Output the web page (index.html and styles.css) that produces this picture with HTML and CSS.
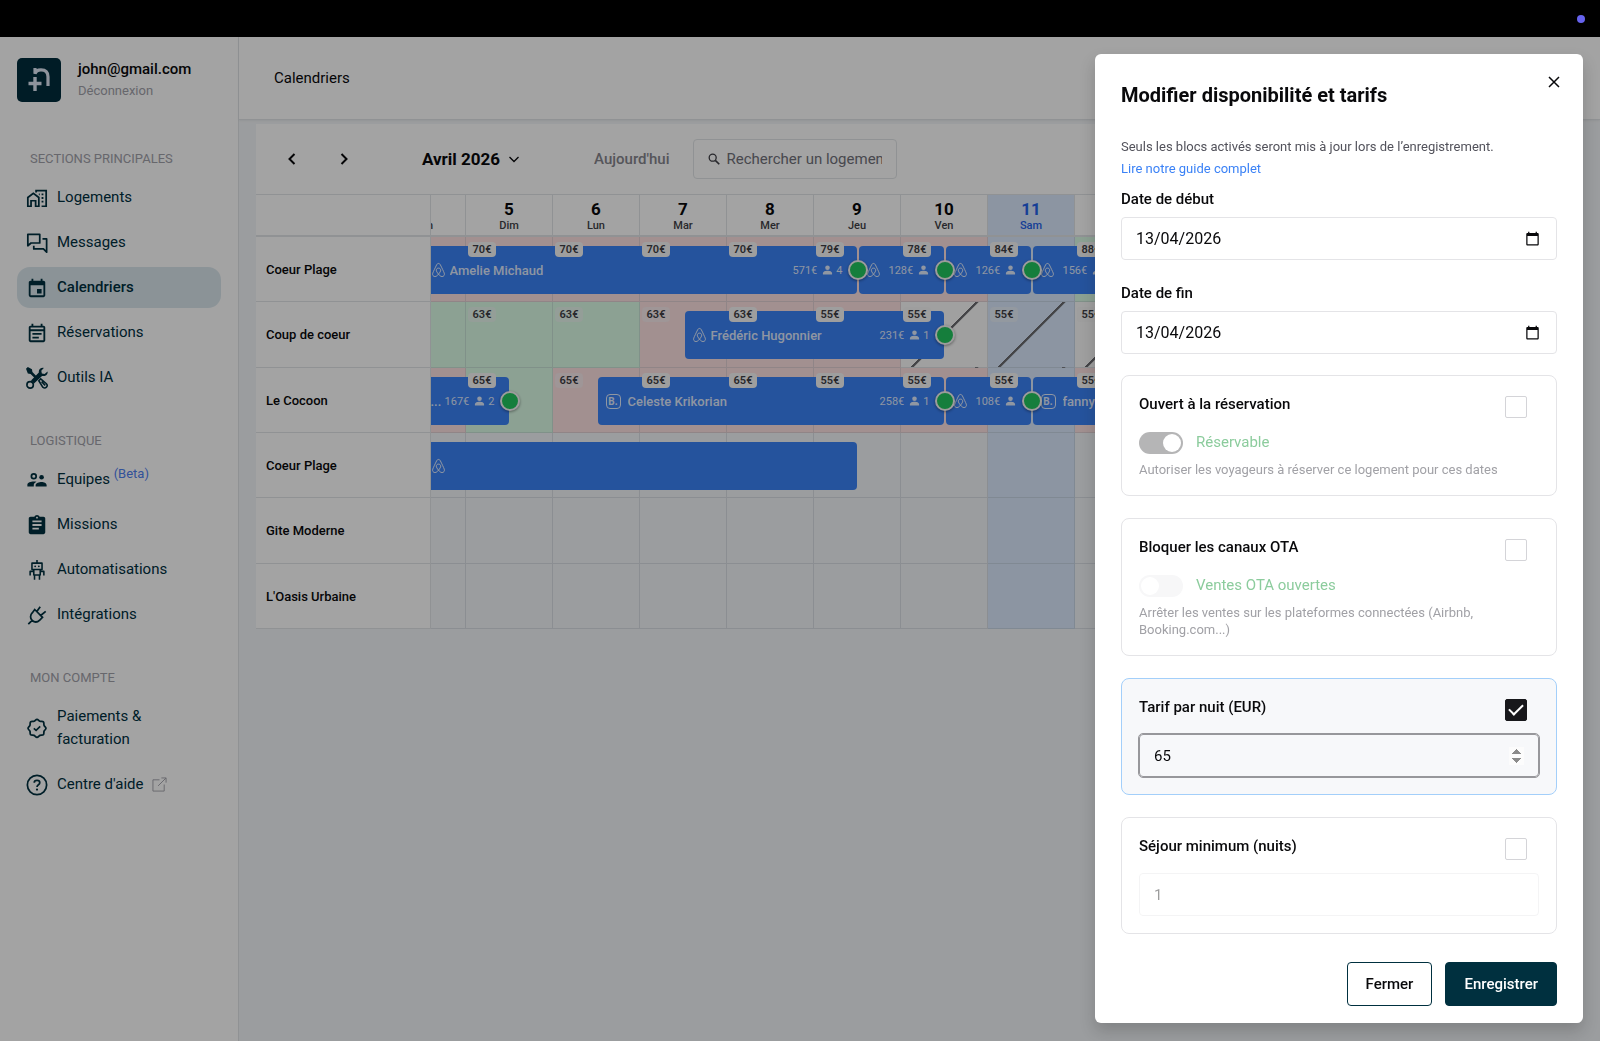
FILE: index.html
```html
<!DOCTYPE html>
<html lang="fr">
<head>
<meta charset="utf-8">
<meta name="viewport" content="width=device-width, initial-scale=1">
<title>Calendriers</title>
<link rel="stylesheet" href="styles.css">
</head>
<body>
<svg class="sprite" aria-hidden="true">
  <symbol id="i-airbnb" viewBox="0 0 24 24"><g fill="none" stroke="currentColor" stroke-width="1.6"><path d="M12 1.5c1.5 0 2.3.9 3.1 2.500 2.100 4.200 5 10.200 6.100 13 1.100 3-.8 5.500-3.500 5.500-2.300 0-4.200-1.900-5.700-3.800-1.500 1.900-3.400 3.800-5.700 3.800-2.700 0-4.600-2.500-3.500-5.500 1.100-2.800 4-8.800 6.100-13 .8-1.600 1.600-2.500 3.100-2.500z"/><path d="M12 18.700c-2-2.400-3.500-4.600-3.500-6.500 0-2 1.500-3.200 3.500-3.200s3.500 1.200 3.500 3.200c0 1.900-1.500 4.100-3.500 6.500z"/></g></symbol>
  <symbol id="i-user" viewBox="0 0 24 24"><circle cx="12" cy="6.500" r="5.500"/><path d="M1 23v-2.500c0-5 6-6.500 11-6.500s11 1.500 11 6.500V23z"/></symbol>
  <symbol id="i-date" viewBox="0 0 24 24"><path d="M20 3h-1V1h-2v2H7V1H5v2H4c-1.100 0-2 .9-2 2v16c0 1.100.9 2 2 2h16c1.100 0 2-.9 2-2V5c0-1.100-.9-2-2-2zm0 18H4V8h16v13z"/></symbol>
</svg>

<div class="topbar"><span class="topbar-dot"></span></div>

<div class="app">
  <aside class="sidebar">
    <div class="profile">
      <svg class="logo" viewBox="0 0 44 44" aria-hidden="true"><rect width="44" height="44" rx="5" fill="#002d3c"/><path d="M18 10v5.500M18 16c.5-2.500 3-4.200 6-4.200 4.500 0 7 2.400 7 7V28" fill="none" stroke="#dfe7f5" stroke-width="3.200"/><path d="M18 19v14M11.500 25.500h13" fill="none" stroke="#dfe7f5" stroke-width="3.400"/></svg>
      <div>
        <div class="email">john@gmail.com</div>
        <a class="logout" href="#">Déconnexion</a>
      </div>
    </div>

    <nav>
      <h2 class="nav-title">SECTIONS PRINCIPALES</h2>
      <ul class="nav-list">
        <li><a class="nav-item" href="#"><svg class="icon" viewBox="0 0 24 24"><path d="M2 21v-9.500L8 7l6 4.500V21h-3.500v-6h-5v6zM11 6V4h11v17h-5" fill="none" stroke="currentColor" stroke-width="1.900"/><path d="M17 7h2v2h-2zM17 11h2v2h-2zM17 15h2v2h-2zM14 7h1v2h-1z"/></svg>Logements</a></li>
        <li><a class="nav-item" href="#"><svg class="icon" viewBox="0 0 24 24"><path d="M2 2.500h13v9.500H5.500L2 15zM18 7.500h4.500v14.500L19 18.500H8.500V15" fill="none" stroke="currentColor" stroke-width="1.900" stroke-linejoin="round"/></svg>Messages</a></li>
        <li><a class="nav-item active" href="#"><svg class="icon" viewBox="0 0 24 24"><path d="M19 4h-1V2h-2v2H8V2H6v2H5c-1.110 0-1.990.9-1.990 2L3 20a2 2 0 0 0 2 2h14c1.100 0 2-.9 2-2V6c0-1.100-.9-2-2-2zm0 16H5V9h14v11zm-7-7h5v5h-5z"/></svg>Calendriers</a></li>
        <li><a class="nav-item" href="#"><svg class="icon" viewBox="0 0 24 24"><path d="M19 4h-1V2h-2v2H8V2H6v2H5c-1.110 0-1.990.9-1.990 2L3 20c0 1.100.89 2 2 2h14c1.100 0 2-.9 2-2V6c0-1.100-.9-2-2-2zm0 16H5V10h14v10zm0-12H5V6h14v2zM7 12h10v2H7zm0 4h7v2H7z"/></svg>Réservations</a></li>
        <li><a class="nav-item" href="#"><svg class="icon" viewBox="0 0 24 24"><path d="M0 2L2 0l4.500 2.500.5 3 5 5-2 2-5-5-3-.5z"/><path d="M14 15l2-2 6 5c1.300 1.300 1.300 3 .3 4s-2.800 1-4 0zM17 16l4 4" fill="none" stroke="currentColor" stroke-width="1.700"/><path d="M23.500 5l-3.200 2.700-3-.6-.6-2.900L19.400 1c-3-.6-6 1.800-5.400 5L5.500 14.700l3.300 3.300 8.700-8.200c3.200.6 6.800-1.600 6-4.800z"/><circle cx="4.500" cy="19.500" r="3.500" fill="none" stroke="currentColor" stroke-width="1.800"/></svg>Outils IA</a></li>
      </ul>
      <h2 class="nav-title">LOGISTIQUE</h2>
      <ul class="nav-list">
        <li><a class="nav-item" href="#"><svg class="icon" viewBox="0 0 24 24"><circle cx="8.500" cy="8" r="2.600" fill="none" stroke="currentColor" stroke-width="1.900"/><circle cx="17" cy="9" r="2.500"/><path d="M1.500 19v-2c0-2.300 3.700-3.500 7-3.500 1 0 2 .1 3 .4-2 1-3 2.200-3 3.600V19zM10.500 19v-1.500c0-2.300 4-3.400 6.500-3.400s5.500 1.100 5.500 3.400V19z"/></svg><span>Equipes <sup class="beta">(Beta)</sup></span></a></li>
        <li><a class="nav-item" href="#"><svg class="icon" viewBox="0 0 24 24"><path d="M19 3h-4.180C14.400 1.840 13.300 1 12 1c-1.300 0-2.400.84-2.820 2H5c-1.100 0-2 .9-2 2v15c0 1.100.9 2 2 2h14c1.100 0 2-.9 2-2V5c0-1.100-.9-2-2-2zm-7 0c.55 0 1 .45 1 1s-.45 1-1 1-1-.45-1-1 .45-1 1-1zm2 14H7v-2h7v2zm3-4H7v-2h10v2zm0-4H7V7h10v2z"/></svg>Missions</a></li>
        <li><a class="nav-item" href="#"><svg class="icon" viewBox="0 0 24 24"><path d="M12 1v3M6.500 4.500h11v7h-11zM8.500 11.500v6h7v-6M8.500 13.500H4.500V18M15.500 13.500h4V18M9.300 17v5.500M14.700 17v5.500" fill="none" stroke="currentColor" stroke-width="1.700" stroke-linejoin="round"/><circle cx="10" cy="8" r="1"/><circle cx="14" cy="8" r="1"/></svg>Automatisations</a></li>
        <li><a class="nav-item" href="#"><svg class="icon" viewBox="0 0 24 24"><path d="M2.500 22l4.500-4.500M9.500 6l8.500 8.500-3 3c-2.700 2.700-6 2.500-8.300.3s-2.400-5.700.3-8.300zM12 8l3.500-5M16 12.500l5.500-4.500" fill="none" stroke="currentColor" stroke-width="1.900"/></svg>Intégrations</a></li>
      </ul>
      <h2 class="nav-title">MON COMPTE</h2>
      <ul class="nav-list">
        <li><a class="nav-item" href="#"><svg class="icon" viewBox="0 0 24 24"><path d="M12 2.500c1.300 0 2 1.600 3.200 2.100s2.900-.2 3.800.7.200 2.600.7 3.800 2.100 1.900 2.100 3.200-1.600 2-2.100 3.200.2 2.900-.7 3.800-2.600.2-3.800.7-1.900 2.100-3.200 2.100-2-1.600-3.200-2.100-2.900.2-3.800-.7-.2-2.600-.7-3.800-2.100-1.900-2.100-3.200 1.600-2 2.100-3.200-.2-2.900.7-3.800 2.600-.2 3.800-.7 1.900-2.100 3.200-2.100z" fill="none" stroke="currentColor" stroke-width="1.900"/><path d="M8.500 12.300l2.500 2.200 4.500-4.300" fill="none" stroke="currentColor" stroke-width="1.800"/></svg><span>Paiements &amp; facturation</span></a></li>
        <li><a class="nav-item" href="#"><svg class="icon" viewBox="0 0 24 24"><circle cx="12" cy="12" r="10.500" fill="none" stroke="currentColor" stroke-width="1.900"/><path d="M9 9.500C9 7.800 10.300 7 12 7s3 .9 3 2.500c0 2.200-3 2.300-3 4.700" fill="none" stroke="currentColor" stroke-width="1.900"/><circle cx="12" cy="17" r="1.200"/></svg>Centre d'aide<svg class="external" viewBox="0 0 16 16"><path d="M8 3H1v12h12V8M10 1h5v5M15 1L6.500 9.500" fill="none" stroke="currentColor"/></svg></a></li>
      </ul>
    </nav>
  </aside>

  <main class="main">
    <header class="page-head"><h1>Calendriers</h1></header>
    <section class="calendar">
      <div class="toolbar">
        <button class="arrow" aria-label="Précédent"><svg viewBox="0 0 16 16"><path d="M10.500 3l-5 5 5 5" fill="none" stroke="currentColor" stroke-width="2"/></svg></button>
        <button class="arrow" aria-label="Suivant"><svg viewBox="0 0 16 16"><path d="M5.500 3l5 5-5 5" fill="none" stroke="currentColor" stroke-width="2"/></svg></button>
        <button class="month">Avril 2026<svg viewBox="0 0 12 12"><path d="M1.500 4L6 8.500 10.500 4" fill="none" stroke="currentColor" stroke-width="1.300"/></svg></button>
        <button class="today-btn">Aujourd'hui</button>
        <label class="search"><svg viewBox="0 0 16 16"><circle cx="6.500" cy="6.500" r="4" fill="none" stroke="currentColor" stroke-width="1.500"/><path d="M9.500 9.500L14 14" stroke="currentColor" stroke-width="1.900"/></svg><input type="search" placeholder="Rechercher un logement" aria-label="Rechercher un logement"></label>
      </div>

      <div class="planning">
        <div class="names">
          <div class="corner"></div>
          <div class="name">Coeur Plage</div>
          <div class="name">Coup de coeur</div>
          <div class="name">Le Cocoon</div>
          <div class="name">Coeur Plage</div>
          <div class="name">Gite Moderne</div>
          <div class="name">L'Oasis Urbaine</div>
        </div>
        <div class="viewport">
          <div class="track">
            <div class="days">
              <div class="day"><b>4</b>Sam</div><div class="day"><b>5</b>Dim</div><div class="day"><b>6</b>Lun</div><div class="day"><b>7</b>Mar</div><div class="day"><b>8</b>Mer</div><div class="day"><b>9</b>Jeu</div><div class="day"><b>10</b>Ven</div><div class="day today"><b>11</b>Sam</div><div class="day"></div>
            </div>

            <div class="row">
              <div class="cell busy"></div><div class="cell busy"><span class="price">70€</span></div><div class="cell busy"><span class="price">70€</span></div><div class="cell busy"><span class="price">70€</span></div><div class="cell busy"><span class="price">70€</span></div><div class="cell busy"><span class="price">79€</span></div><div class="cell busy"><span class="price">78€</span></div><div class="cell today"><span class="price">84€</span></div><div class="cell free"><span class="price">88€</span></div>
              <div class="booking" style="--from:.5;--nights:5"><svg class="channel"><use href="#i-airbnb"/></svg><span class="guest">Amelie Michaud</span><span class="meta">571€<svg><use href="#i-user"/></svg>4</span><i class="paid"></i></div>
              <div class="booking" style="--from:5.5;--nights:1"><svg class="channel"><use href="#i-airbnb"/></svg><span class="guest"></span><span class="meta">128€<svg><use href="#i-user"/></svg></span><i class="paid"></i></div>
              <div class="booking" style="--from:6.5;--nights:1"><svg class="channel"><use href="#i-airbnb"/></svg><span class="guest"></span><span class="meta">126€<svg><use href="#i-user"/></svg></span><i class="paid"></i></div>
              <div class="booking" style="--from:7.5;--nights:1"><svg class="channel"><use href="#i-airbnb"/></svg><span class="guest"></span><span class="meta">156€<svg><use href="#i-user"/></svg></span></div>
            </div>

            <div class="row">
              <div class="cell free"></div><div class="cell free"><span class="price bare">63€</span></div><div class="cell free"><span class="price bare">63€</span></div><div class="cell busy"><span class="price bare">63€</span></div><div class="cell busy"><span class="price">63€</span></div><div class="cell busy"><span class="price">55€</span></div><div class="cell closed"><span class="price">55€</span></div><div class="cell today closed"><span class="price bare">55€</span></div><div class="cell closed"><span class="price bare">55€</span></div>
              <div class="booking" style="--from:3.5;--nights:3"><svg class="channel"><use href="#i-airbnb"/></svg><span class="guest">Frédéric Hugonnier</span><span class="meta">231€<svg><use href="#i-user"/></svg>1</span><i class="paid"></i></div>
            </div>

            <div class="row">
              <div class="cell busy"></div><div class="cell free"><span class="price">65€</span></div><div class="cell busy"><span class="price bare">65€</span></div><div class="cell busy"><span class="price">65€</span></div><div class="cell busy"><span class="price">65€</span></div><div class="cell busy"><span class="price">55€</span></div><div class="cell busy"><span class="price">55€</span></div><div class="cell today"><span class="price">55€</span></div><div class="cell busy"><span class="price">55€</span></div>
              <div class="booking" style="--from:.5;--nights:1"><span class="guest">...</span><span class="meta">167€<svg><use href="#i-user"/></svg>2</span><i class="paid"></i></div>
              <div class="booking" style="--from:2.5;--nights:4"><span class="channel-b">B.</span><span class="guest">Celeste Krikorian</span><span class="meta">258€<svg><use href="#i-user"/></svg>1</span><i class="paid"></i></div>
              <div class="booking" style="--from:6.5;--nights:1"><svg class="channel"><use href="#i-airbnb"/></svg><span class="guest"></span><span class="meta">108€<svg><use href="#i-user"/></svg></span><i class="paid"></i></div>
              <div class="booking" style="--from:7.5;--nights:1"><span class="channel-b">B.</span><span class="guest">fanny</span></div>
            </div>

            <div class="row">
              <div class="cell"></div><div class="cell"></div><div class="cell"></div><div class="cell"></div><div class="cell"></div><div class="cell"></div><div class="cell"></div><div class="cell today"></div><div class="cell"></div>
              <div class="booking" style="--from:.5;--nights:5"><svg class="channel"><use href="#i-airbnb"/></svg></div>
            </div>
            <div class="row">
              <div class="cell"></div><div class="cell"></div><div class="cell"></div><div class="cell"></div><div class="cell"></div><div class="cell"></div><div class="cell"></div><div class="cell today"></div><div class="cell"></div>
            </div>
            <div class="row">
              <div class="cell"></div><div class="cell"></div><div class="cell"></div><div class="cell"></div><div class="cell"></div><div class="cell"></div><div class="cell"></div><div class="cell today"></div><div class="cell"></div>
            </div>
          </div>
        </div>
      </div>
    </section>
  </main>
  <div class="backdrop"></div>
</div>

<form class="drawer" role="dialog" aria-labelledby="drawer-title">
  <button class="close" type="button" aria-label="Fermer la fenêtre"><svg viewBox="0 0 12 12"><path d="M1 1l10 10M11 1L1 11" stroke="currentColor" stroke-width="1.500"/></svg></button>
  <h2 id="drawer-title" class="drawer-title">Modifier disponibilité et tarifs</h2>
  <p class="intro">Seuls les blocs activés seront mis à jour lors de l’enregistrement.</p>
  <a class="guide" href="#">Lire notre guide complet</a>

  <label class="label" for="start">Date de début</label>
  <div class="date"><input id="start" type="text" value="13/04/2026"><svg><use href="#i-date"/></svg></div>
  <label class="label" for="end">Date de fin</label>
  <div class="date"><input id="end" type="text" value="13/04/2026"><svg><use href="#i-date"/></svg></div>

  <div class="blocks">
    <section class="block">
      <div class="block-head"><label for="b1">Ouvert à la réservation</label><input id="b1" class="check" type="checkbox"></div>
      <div class="switch-row"><input id="s1" class="switch" type="checkbox" role="switch" checked disabled><label for="s1">Réservable</label></div>
      <p class="hint">Autoriser les voyageurs à réserver ce logement pour ces dates</p>
    </section>
    <section class="block">
      <div class="block-head"><label for="b2">Bloquer les canaux OTA</label><input id="b2" class="check" type="checkbox"></div>
      <div class="switch-row"><input id="s2" class="switch" type="checkbox" role="switch" disabled><label for="s2">Ventes OTA ouvertes</label></div>
      <p class="hint">Arrêter les ventes sur les plateformes connectées (Airbnb, Booking.com...)</p>
    </section>
    <section class="block on">
      <div class="block-head"><label for="b3">Tarif par nuit (EUR)</label><input id="b3" class="check" type="checkbox" checked></div>
      <input class="number focused" type="number" value="65" aria-label="Tarif par nuit">
    </section>
    <section class="block">
      <div class="block-head"><label for="b4">Séjour minimum (nuits)</label><input id="b4" class="check" type="checkbox"></div>
      <input class="number" type="number" value="1" aria-label="Séjour minimum" disabled>
    </section>
  </div>

  <div class="actions">
    <button class="btn" type="button">Fermer</button>
    <button class="btn primary" type="submit">Enregistrer</button>
  </div>
</form>
</body>
</html>
```
FILE: styles.css
```css
* { box-sizing: border-box; }

:root {
  --navy: #00303f;
  --line: #e2e5e8;
  --day: 87px;
  --row: 65px;
}

body {
  margin: 0;
  min-height: 100vh;
  display: flex;
  flex-direction: column;
  font: 15px/23px Roboto, "Liberation Sans", sans-serif;
  color: #09090b;
  background: #f3f6f9;
}

button, input { font: inherit; color: inherit; }
button { background: none; border: 0; padding: 0; cursor: pointer; }
a { text-decoration: none; }
h1, h2, p, ul { margin: 0; padding: 0; }
ul { list-style: none; }
svg { fill: currentColor; flex: none; }
.sprite { position: absolute; width: 0; height: 0; }

.topbar {
  height: 37px;
  padding-right: 15px;
  display: flex;
  align-items: center;
  justify-content: flex-end;
  background: #000;
}
.topbar-dot { width: 8px; height: 8px; border-radius: 50%; background: #6663ee; }

.app { position: relative; flex: 1; display: flex; }
.backdrop { position: absolute; inset: 0; z-index: 10; background: rgba(0, 0, 0, .36); }

/* Sidebar */
.sidebar {
  flex: none;
  width: 239px;
  padding: 21px 17px;
  background: #fff;
  border-right: 1px solid var(--line);
}
.profile { display: flex; gap: 17px; margin-bottom: 47px; }
.logo { width: 44px; height: 44px; }
.email { font-weight: 500; line-height: 22px; }
.logout { font-size: 13px; line-height: 22px; color: #a1a1aa; display: block; }
.nav-title {
  margin: 33px 0 8px;
  padding-left: 13px;
  font-size: 13px;
  font-weight: 400;
  line-height: 20px;
  color: #a1a1aa;
}
.nav-list { display: grid; gap: 4px; }
.nav-item {
  display: flex;
  align-items: center;
  gap: 9px;
  padding: 9px 70px 9px 9px;
  border-radius: 13px;
  color: var(--navy);
  white-space: nowrap;
}
.nav-item > span { white-space: normal; }
.nav-item.active { background: #dae7ed; font-weight: 500; }
.icon { width: 22px; height: 22px; }
.beta { font-size: 13px; line-height: 0; color: #4f80f0; vertical-align: 6px; }
.nav-item:has(.beta) { padding-right: 9px; }
.external { width: 15px; height: 15px; color: #a1a1aa; }

/* Page */
.main { flex: 1; min-width: 0; }
.page-head {
  height: 83px;
  padding: 0 35px;
  display: flex;
  align-items: center;
  background: #fff;
  border-bottom: 1px solid var(--line);
  box-shadow: 0 1px 2px rgba(0, 0, 0, .06);
}
.page-head h1 { font-size: 15px; font-weight: 400; }
.calendar { margin: 4px 17px 0; }
.toolbar {
  height: 71px;
  padding-left: 28px;
  display: flex;
  align-items: center;
  background: #fff;
  border-bottom: 1px solid var(--line);
}
.arrow { width: 16px; height: 16px; display: flex; margin-right: 36px; }
.arrow svg { width: 16px; height: 16px; }
.month {
  display: flex;
  align-items: center;
  gap: 8px;
  margin-left: 34px;
  font-size: 17px;
  font-weight: 700;
}
.month svg { width: 12px; height: 12px; }
.today-btn { margin-left: 74px; font-weight: 500; color: #71717a; opacity: .85; }
.search {
  width: 204px;
  height: 40px;
  margin-left: 23px;
  padding: 0 14px 0 13px;
  display: flex;
  align-items: center;
  gap: 6px;
  border: 1px solid var(--line);
  border-radius: 4px;
}
.search svg { width: 14px; height: 14px; color: #3f3f46; }
.search input {
  appearance: none;
  flex: 1;
  min-width: 0;
  padding: 0;
  border: 0;
  outline: 0;
  background: none;
}
.search input::-webkit-search-cancel-button { display: none; }
.search input::placeholder { color: #71717a; }

.planning { display: flex; }
.names { flex: none; width: 175px; background: #fff; border-right: 1px solid var(--line); }
.corner { height: 42px; border-bottom: 2px solid var(--line); }
.name {
  height: var(--row);
  padding-left: 10px;
  display: flex;
  align-items: center;
  font-size: 13px;
  font-weight: 500;
  border-bottom: 1px solid var(--line);
}
.viewport { flex: 1; min-width: 0; overflow: hidden; }
.track { width: max-content; margin-left: -52px; }
.days { display: flex; height: 42px; background: #fff; border-bottom: 2px solid var(--line); }
.day {
  width: var(--day);
  padding-top: 5px;
  font-size: 11px;
  font-weight: 500;
  line-height: 13px;
  text-align: center;
  color: #3f3f46;
  border-right: 1px solid var(--line);
}
.day b { display: block; font-size: 17px; line-height: 19px; font-weight: 700; color: #09090b; }
.day.today, .day.today b { color: #2563eb; }
.today { background: #dbeafe; }

.row { position: relative; display: flex; height: var(--row); }
.name:nth-child(3n), .row:nth-child(3n) { --row: 66px; }
.cell {
  width: var(--day);
  padding: 5px 0 0 2px;
  border-right: 1px solid rgba(160, 170, 180, .3);
  border-bottom: 1px solid rgba(160, 170, 180, .3);
}
.busy { background: #fee2e2; }
.free { background: #dcfce7; }
.closed {
  background-color: #fafafa;
  background-image: linear-gradient(135deg, transparent calc(50% - 1px), #6b6b70 calc(50% - 1px), #6b6b70 calc(50% + 1px), transparent calc(50% + 2px));
}
.today.closed { background-color: #dbeafe; }
.price {
  position: relative;
  z-index: 2;
  display: block;
  width: 28px;
  border-radius: 4px;
  font-size: 11px;
  font-weight: 600;
  line-height: 15px;
  text-align: center;
  color: #3f3f46;
  background: #f8f8f8;
}
.price.bare { background: rgba(244, 244, 245, .5); }

/* Bookings run from midday to midday, so they sit over the day cells. */
.booking {
  position: absolute;
  top: 9px;
  left: calc(var(--from) * var(--day) + 1px);
  width: calc(var(--nights) * var(--day) - 2px);
  height: 48px;
  padding: 0 14px 0 7px;
  display: flex;
  align-items: center;
  gap: 4px;
  border-radius: 4px;
  color: rgba(255, 255, 255, .85);
  background: #3b82f6;
}
.channel { width: 15px; height: 18px; }
.channel-b {
  flex: none;
  width: 15px;
  height: 15px;
  margin: 0 3px 0 1px;
  border: 1px solid currentColor;
  border-radius: 4px;
  font-size: 10px;
  font-weight: 700;
  line-height: 13px;
  text-align: center;
}
.guest { flex: 1; min-width: 0; font-size: 13px; font-weight: 500; overflow: hidden; white-space: nowrap; }
.meta { display: flex; align-items: center; font-size: 11px; }
.meta svg { width: 11px; height: 10px; margin: 0 3px 0 5px; }
.paid {
  position: absolute;
  z-index: 3;
  top: 14px;
  right: -11px;
  width: 20px;
  height: 20px;
  border: 2px solid #f4f4f5;
  border-radius: 50%;
  background: #22c55e;
  box-shadow: 0 1px 3px rgba(0, 0, 0, .4);
}

/* Drawer */
.drawer {
  position: fixed;
  z-index: 20;
  top: 54px;
  right: 17px;
  bottom: 18px;
  width: 488px;
  padding: 26px;
  overflow: auto;
  display: flex;
  flex-direction: column;
  border-radius: 6px;
  background: #fff;
  box-shadow: 0 8px 16px rgba(24, 24, 27, .2);
}
.close { position: absolute; top: 22px; right: 23px; width: 12px; height: 12px; display: flex; }
.close svg { width: 12px; height: 12px; }
.drawer-title { font-size: 20px; font-weight: 700; line-height: 30px; margin-bottom: 26px; }
.intro { font-size: 13px; line-height: 22px; color: #52525b; }
.guide { font-size: 13px; line-height: 22px; color: #3b82f6; align-self: flex-start; }
.label { font-weight: 500; margin: 8px 0 6px; }
.date {
  display: flex;
  align-items: center;
  height: 43px;
  margin-bottom: 14px;
  padding: 0 16px 0 14px;
  border: 1px solid #e4e4e7;
  border-radius: 4px;
}
.date input { flex: 1; min-width: 0; padding: 0; border: 0; outline: 0; background: none; font-size: 16px; }
.date svg { width: 15px; height: 15px; }

.blocks { display: grid; gap: 22px; margin-top: 7px; }
.block { padding: 17px; border: 1px solid #e4e4e7; border-radius: 8px; }
.block.on { border-color: #a3cffa; background: #f7f8fa; }
.block-head { display: flex; justify-content: space-between; padding-right: 12px; font-weight: 500; }
.check {
  appearance: none;
  width: 22px;
  height: 22px;
  margin: 3px 0 0;
  border: 1px solid #d4d4d8;
  border-radius: 2px;
  display: grid;
  place-items: center;
}
.check:checked { border-color: #18181b; background: #18181b; }
.check:checked::after {
  content: "";
  width: 12px;
  height: 6px;
  border: solid #fff;
  border-width: 0 0 2px 2px;
  transform: translateY(-2px) rotate(-45deg);
}
.switch-row { display: flex; align-items: center; gap: 13px; margin-top: 13px; color: #8ccc9d; }
.switch {
  appearance: none;
  width: 44px;
  height: 22px;
  margin: 0;
  padding: 2px;
  border-radius: 11px;
  display: flex;
  background: #f7f7f8;
}
.switch::before { content: ""; width: 18px; height: 18px; border-radius: 50%; background: #fff; }
.switch:checked { background: #b5b5b6; justify-content: flex-end; }
.hint { margin-top: 7px; font-size: 13px; line-height: 17px; color: #a1a1a6; }
.number {
  display: block;
  width: 100%;
  height: 43px;
  margin-top: 13px;
  padding: 0 14px;
  border: 1px solid #e4e4e7;
  border-radius: 4px;
  background: none;
}
.number:disabled { opacity: .4; }
.number.focused { outline: 1px solid #97979b; border-color: #97979b; }
.number.focused::-webkit-inner-spin-button { opacity: 1; }

.actions { display: flex; justify-content: flex-end; gap: 13px; margin-top: auto; padding-top: 27px; margin-bottom: -9px; }
.btn { height: 44px; padding: 0 18px; border: 1px solid var(--navy); border-radius: 4px; font-weight: 500; }
.btn.primary { background: #00303f; color: #fff; }
```
